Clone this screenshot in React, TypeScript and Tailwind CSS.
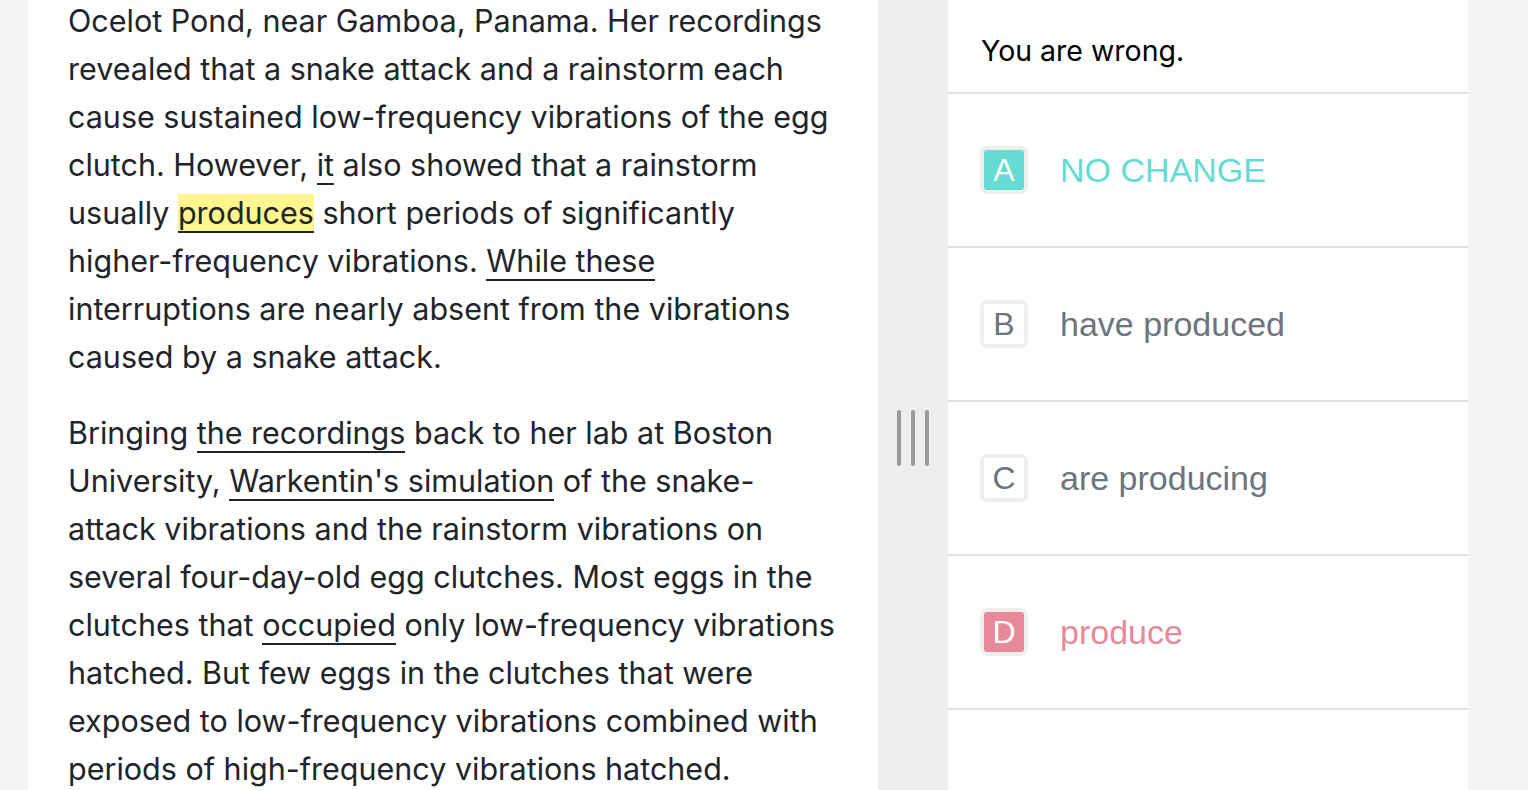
import React from 'react';

type Choice = {
  letter: string;
  text: string;
  state: 'correct' | 'wrong' | 'idle';
};

const choices: Choice[] = [
  { letter: 'A', text: 'NO CHANGE', state: 'correct' },
  { letter: 'B', text: 'have produced', state: 'idle' },
  { letter: 'C', text: 'are producing', state: 'idle' },
  { letter: 'D', text: 'produce', state: 'wrong' },
];

const U: React.FC<{ children: React.ReactNode; mark?: boolean }> = ({ children, mark }) => (
  <span className={`border-b-2 border-[#212529] ${mark ? 'bg-[#fff68f]' : ''}`}>{children}</span>
);

const ChoiceRow: React.FC<{ choice: Choice }> = ({ choice }) => {
  const badge =
    choice.state === 'correct'
      ? 'bg-[#66dbd1] text-white'
      : choice.state === 'wrong'
        ? 'bg-[#e8899a] text-white'
        : 'bg-white text-[#6c757d]';
  const label =
    choice.state === 'correct'
      ? 'text-[#66dbd1]'
      : choice.state === 'wrong'
        ? 'text-[#e8899a]'
        : 'text-[#6c757d]';

  return (
    <div className="h-[154px] border-b-2 border-[#dee2e6] flex items-center pl-[32px]">
      <div className="w-[48px] h-[48px] rounded-[7px] border-4 border-[#eeeeee] flex items-center justify-center shrink-0">
        <div className={`w-full h-full rounded-[3px] flex items-center justify-center text-[32px] leading-none ${badge}`}>
          {choice.letter}
        </div>
      </div>
      <span className={`ml-[32px] text-[34px] ${label}`}>{choice.text}</span>
    </div>
  );
};

const App: React.FC = () => {
  return (
    <div className="h-[790px] overflow-hidden flex bg-[#f4f4f4] pl-[28px] pr-[60px]">
      {/* Passage */}
      <div className="w-[850px] bg-white px-[40px] overflow-hidden">
        <div className="-mt-[3px] text-[30.5px] leading-[48px] text-[#212529] font-['Inter',sans-serif]">
          <p>
            Ocelot Pond, near Gamboa, Panama. Her recordings revealed that a snake attack and a rainstorm each
            cause sustained low-frequency vibrations of the egg clutch. However, <U>it</U> also showed that a
            rainstorm usually <U mark>produces</U> short periods of significantly higher-frequency vibrations.{' '}
            <U>While these</U> interruptions are nearly absent from the vibrations caused by a snake attack.
          </p>
          <p className="mt-[28px]">
            Bringing <U>the recordings</U> back to her lab at Boston University, <U>Warkentin's simulation</U> of
            the snake-attack vibrations and the rainstorm vibrations on several four-day-old egg clutches. Most
            eggs in the clutches that <U>occupied</U> only low-frequency vibrations hatched. But few eggs in the
            clutches that were exposed to low-frequency vibrations combined with periods of high-frequency
            vibrations hatched.
          </p>
        </div>
      </div>

      {/* Resize handle */}
      <div className="w-[70px] bg-[#eeeeee] flex justify-center pt-[410px]">
        <div className="flex gap-[10px] h-[56px]">
          <div className="w-[4px] h-full bg-[#9a9a9a] rounded-sm" />
          <div className="w-[4px] h-full bg-[#9a9a9a] rounded-sm" />
          <div className="w-[4px] h-full bg-[#9a9a9a] rounded-sm" />
        </div>
      </div>

      {/* Answers */}
      <div className="w-[520px] bg-white font-['Liberation_Sans',sans-serif]">
        <div className="h-[94px] border-b-2 border-[#dee2e6] flex items-center pl-[33px] pt-[10px]">
          <span className="text-[28.5px] text-black font-['Inter',sans-serif]">You are wrong.</span>
        </div>
        {choices.map((c) => (
          <ChoiceRow key={c.letter} choice={c} />
        ))}
      </div>
    </div>
  );
};

export default App;
